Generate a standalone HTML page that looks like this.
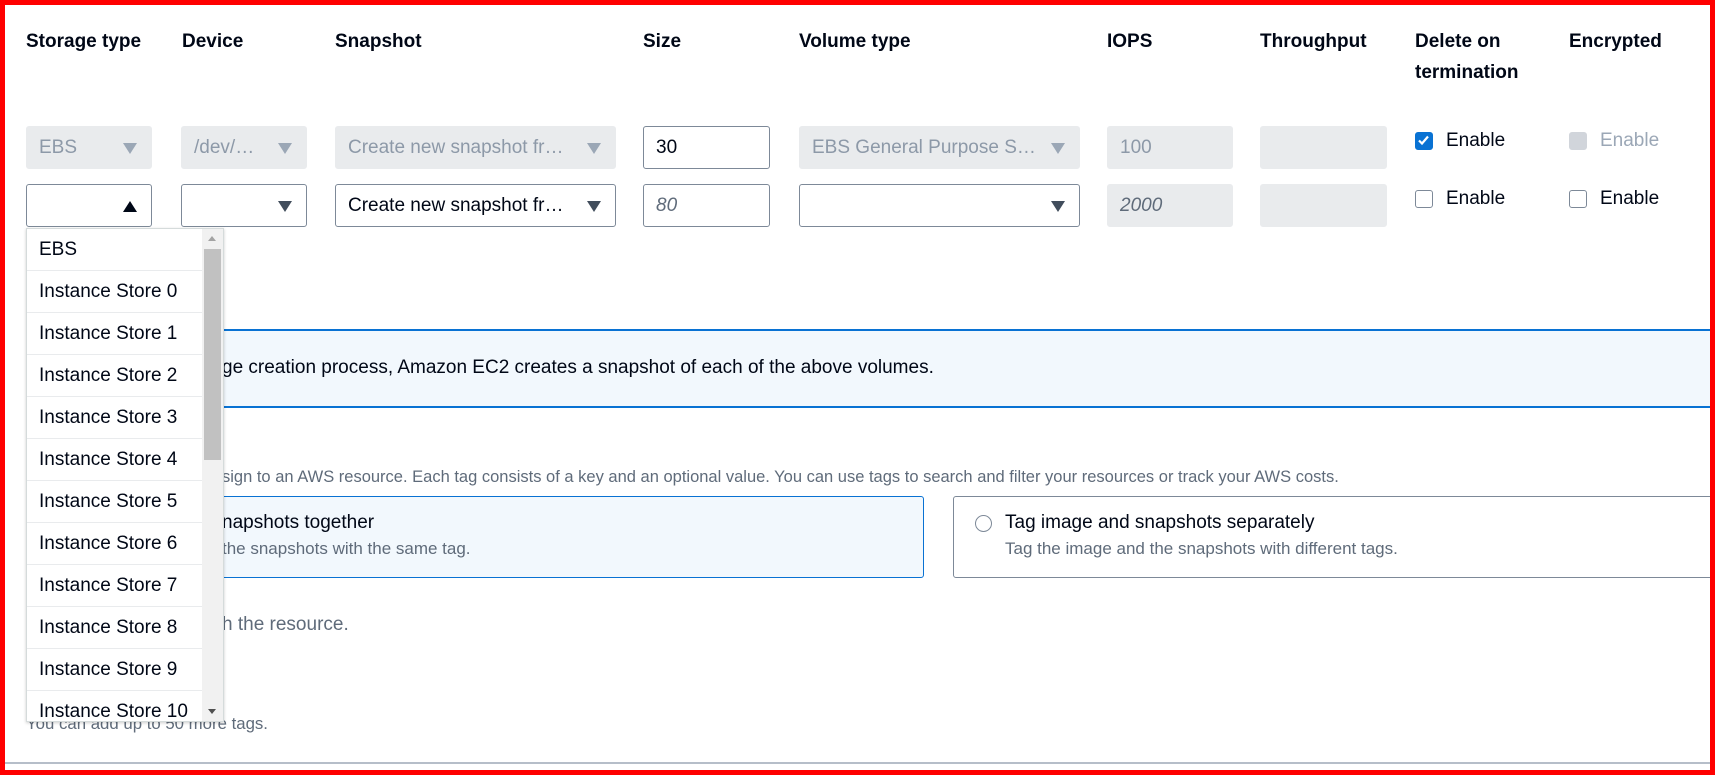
<!DOCTYPE html>
<html><head><meta charset="utf-8"><style>
*{box-sizing:border-box;margin:0;padding:0}
body{width:1715px;height:775px;overflow:hidden;background:#fff;font-family:"Liberation Sans",sans-serif;color:#000716;position:relative}
.a{position:absolute}
.h{font-weight:bold;font-size:19px;top:26px;line-height:31px;color:#000716}
.in{position:absolute;height:43px;border:1px solid #7d8998;border-radius:3px;font-size:19px;line-height:41px;padding-left:12px;background:#fff;white-space:nowrap;overflow:hidden}
.dis{background:#e9ebed;border-color:#e9ebed;color:#8d99a8}
.tri{position:absolute;right:14px;top:16px;width:0;height:0;border-left:7px solid transparent;border-right:7px solid transparent;border-top:11px solid #414d5c}
.dis .tri{border-top-color:#9ba7b6}
.up{border-top:none;border-bottom:11px solid #000716}
.cb{position:absolute;width:18px;height:18px;border:1.5px solid #7d8998;border-radius:3px;background:#fff}
.lbl{position:absolute;font-size:19px;line-height:20px}
.dd{position:absolute;left:26px;top:228px;width:198px;height:494px;background:#fff;border:1px solid #d5dbdb;overflow:hidden;box-shadow:0 1px 3px rgba(0,0,0,.2)}
.it{height:42px;border-bottom:1px solid #e9ebed;width:177px;font-size:19px;line-height:42px;padding-left:12px;white-space:nowrap}
.sb{position:absolute;right:0;top:0;width:21px;height:100%;background:#f1f1f1}
.gray{color:#5f6b7a}
</style></head><body>
<div class="a h" style="left:26px">Storage type</div>
<div class="a h" style="left:182px">Device</div>
<div class="a h" style="left:335px">Snapshot</div>
<div class="a h" style="left:643px">Size</div>
<div class="a h" style="left:799px">Volume type</div>
<div class="a h" style="left:1107px">IOPS</div>
<div class="a h" style="left:1260px">Throughput</div>
<div class="a h" style="left:1415px">Delete on<br>termination</div>
<div class="a h" style="left:1569px">Encrypted</div>

<div class="in dis" style="left:26px;top:126px;width:126px">EBS<span class="tri"></span></div>
<div class="in dis" style="left:181px;top:126px;width:126px">/dev/…<span class="tri"></span></div>
<div class="in dis" style="left:335px;top:126px;width:281px">Create new snapshot fr…<span class="tri"></span></div>
<div class="in" style="left:643px;top:126px;width:127px">30</div>
<div class="in dis" style="left:799px;top:126px;width:281px">EBS General Purpose S…<span class="tri"></span></div>
<div class="in dis" style="left:1107px;top:126px;width:126px">100</div>
<div class="in dis" style="left:1260px;top:126px;width:127px"></div>
<div class="cb" style="left:1415px;top:132px;background:#0972d3;border-color:#0972d3"><svg width="15" height="15" viewBox="0 0 15 15" style="position:absolute;left:0;top:0"><path d="M3 7.5l3 3 6-7" stroke="#fff" stroke-width="2.2" fill="none"/></svg></div>
<div class="lbl" style="left:1446px;top:131px">Enable</div>
<div class="cb" style="left:1569px;top:132px;background:#d1d5db;border-color:#d1d5db"></div>
<div class="lbl" style="left:1600px;top:131px;color:#9ba7b6">Enable</div>

<div class="in" style="left:26px;top:184px;width:126px"><span class="tri up"></span></div>
<div class="in" style="left:181px;top:184px;width:126px"><span class="tri"></span></div>
<div class="in" style="left:335px;top:184px;width:281px">Create new snapshot fr…<span class="tri"></span></div>
<div class="in" style="left:643px;top:184px;width:127px;color:#5f6b7a;font-style:italic">80</div>
<div class="in" style="left:799px;top:184px;width:281px"><span class="tri"></span></div>
<div class="in dis" style="left:1107px;top:184px;width:126px;color:#5f6b7a;font-style:italic">2000</div>
<div class="in dis" style="left:1260px;top:184px;width:127px"></div>
<div class="cb" style="left:1415px;top:190px"></div>
<div class="lbl" style="left:1446px;top:189px">Enable</div>
<div class="cb" style="left:1569px;top:190px"></div>
<div class="lbl" style="left:1600px;top:189px">Enable</div>

<div class="a" style="left:200px;top:329px;width:1520px;height:79px;background:#f2f8fd;border-top:2px solid #0972d3;border-bottom:2px solid #0972d3"></div>
<div class="a" style="left:222px;top:357px;font-size:19px;white-space:nowrap">ge creation process, Amazon EC2 creates a snapshot of each of the above volumes.</div>

<div class="a gray" style="left:222px;top:468px;font-size:16.5px;white-space:nowrap">sign to an AWS resource. Each tag consists of a key and an optional value. You can use tags to search and filter your resources or track your AWS costs.</div>

<div class="a" style="left:200px;top:496px;width:724px;height:82px;background:#f2f8fd;border:1px solid #0972d3;border-radius:3px"></div>
<div class="a" style="left:222px;top:512px;font-size:19px">napshots together</div>
<div class="a gray" style="left:222px;top:539px;font-size:17px">the snapshots with the same tag.</div>

<div class="a" style="left:953px;top:496px;width:800px;height:82px;border:1px solid #7d8998;border-radius:3px"></div>
<div class="a" style="left:975px;top:515px;width:17px;height:17px;border:1.5px solid #7d8998;border-radius:50%"></div>
<div class="a" style="left:1005px;top:512px;font-size:19px">Tag image and snapshots separately</div>
<div class="a gray" style="left:1005px;top:539px;font-size:17px">Tag the image and the snapshots with different tags.</div>

<div class="a gray" style="left:222px;top:614px;font-size:19px">h the resource.</div>
<div class="a gray" style="left:26px;top:714px;font-size:16.8px">You can add up to 50 more tags.</div>
<div class="a" style="left:0;top:762px;width:1715px;height:2px;background:#b6bec9"></div>

<div class="dd">
<div class="it">EBS</div>
<div class="it">Instance Store 0</div>
<div class="it">Instance Store 1</div>
<div class="it">Instance Store 2</div>
<div class="it">Instance Store 3</div>
<div class="it">Instance Store 4</div>
<div class="it">Instance Store 5</div>
<div class="it">Instance Store 6</div>
<div class="it">Instance Store 7</div>
<div class="it">Instance Store 8</div>
<div class="it">Instance Store 9</div>
<div class="it">Instance Store 10</div>
<div class="sb"><div class="a" style="left:6px;top:7px;border-left:4px solid transparent;border-right:4px solid transparent;border-bottom:5px solid #a3a3a3"></div><div class="a" style="left:2px;top:20px;width:17px;height:211px;background:#c1c1c1"></div><div class="a" style="left:6px;top:480px;border-left:4px solid transparent;border-right:4px solid transparent;border-top:5px solid #505050"></div></div>
</div>

<div class="a" style="left:0;top:0;width:1715px;height:5px;background:#f00"></div>
<div class="a" style="left:0;top:770px;width:1715px;height:5px;background:#f00"></div>
<div class="a" style="left:0;top:0;width:5px;height:775px;background:#f00"></div>
<div class="a" style="left:1710px;top:0;width:5px;height:775px;background:#f00"></div>
</body></html>
